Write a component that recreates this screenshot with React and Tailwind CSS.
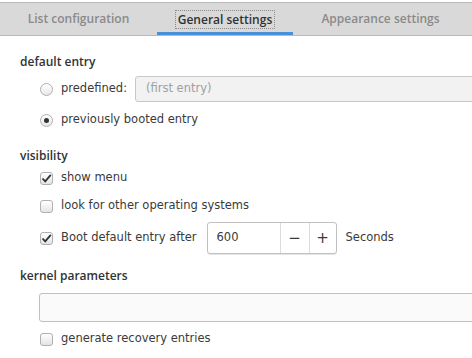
import React from "react";

function Radio({ checked }) {
  return (
    <span className="w-[13px] h-[13px] rounded-full border border-[#b0b0b0] bg-gradient-to-b from-[#ffffff] to-[#e8e8e8] flex items-center justify-center shrink-0">
      {checked && <span className="w-[5px] h-[5px] rounded-full bg-[#333]" />}
    </span>
  );
}

function Check({ checked }) {
  return (
    <span className="w-[13px] h-[13px] rounded-[3px] border border-[#b0b0b0] bg-gradient-to-b from-[#ffffff] to-[#e4e4e4] flex items-center justify-center shrink-0">
      {checked && (
        <svg width="11" height="11" viewBox="0 0 11 11">
          <path d="M1.5 5.5 L4.2 8.3 L9.8 1.8" fill="none" stroke="#2e3436" strokeWidth="1.8" />
        </svg>
      )}
    </span>
  );
}

export default function App() {
  const body = { fontFamily: '"DejaVu Sans", sans-serif' };
  const head = { fontFamily: '"Open Sans", sans-serif' };
  return (
    <div className="w-[472px] h-[358px] bg-white overflow-hidden text-[#3a3a3a]" style={body}>
      <div className="h-[34px] mt-[2px] bg-[#d9d9d9] border-t border-b border-[#b8b8b8] flex text-[12px] font-semibold" style={head}>
        <div className="w-[157px] flex items-center justify-center text-[#8a8a8a]">List configuration</div>
        <div className="w-[136px] flex items-center justify-center border-b-[3px] border-[#4a90d9] pt-[3px]">
          <span className="px-[2px] border border-dotted border-[#8a8a8a] leading-[17px] text-[#2e3436]">General settings</span>
        </div>
        <div className="w-[179px] flex items-center justify-center text-[#8a8a8a] pr-[4px]">Appearance settings</div>
      </div>

      <div className="pl-[20px] text-[11.5px]">
        <div className="mt-[17px] text-[12px] font-semibold text-[#2e3436]" style={head}>default entry</div>
        <div className="pl-[20px]">
          <div className="mt-[5px] flex items-center h-[26px]">
            <Radio />
            <span className="ml-[8px] w-[74px]">predefined:</span>
            <div className="flex-1 h-[26px] -mr-[4px] bg-[#f2f2f2] border border-[#c8c8c8] rounded-l-[3px] flex items-center pl-[10px] text-[#a0a0a0]">(first entry)</div>
          </div>
          <div className="mt-[5px] flex items-center h-[26px]">
            <Radio checked />
            <span className="ml-[8px]">previously booted entry</span>
          </div>
        </div>

        <div className="mt-[14px] text-[12px] font-semibold text-[#2e3436]" style={head}>visibility</div>
        <div className="pl-[20px]">
          <div className="flex items-center h-[26px]">
            <Check checked />
            <span className="ml-[8px]">show menu</span>
          </div>
          <div className="mt-[2px] flex items-center h-[26px]">
            <Check />
            <span className="ml-[8px]">look for other operating systems</span>
          </div>
          <div className="mt-[3px] flex items-center h-[32px]">
            <Check checked />
            <span className="ml-[8px]">Boot default entry after</span>
            <div className="ml-[10px] h-[32px] w-[130px] border border-[#c0c0c0] rounded-[3px] flex shadow-[0_1px_0_#e6e6e6]">
              <div className="w-[72px] flex items-center pl-[9px]">600</div>
              <div className="w-[29px] border-l border-[#dcdcdc] flex items-center justify-center text-[15px]">−</div>
              <div className="flex-1 border-l border-[#dcdcdc] flex items-center justify-center text-[15px]">+</div>
            </div>
            <span className="ml-[9px]">Seconds</span>
          </div>
        </div>

        <div className="mt-[13px] text-[12px] font-semibold text-[#2e3436]" style={head}>kernel parameters</div>
        <div className="pl-[19px]">
          <div className="mt-[8px] h-[29px] -mr-[4px] border border-[#c0c0c0] rounded-l-[3px] bg-[#fafafa]" />
          <div className="mt-[6px] flex items-center h-[22px] pl-[1px]">
            <Check />
            <span className="ml-[8px]">generate recovery entries</span>
          </div>
        </div>
      </div>
    </div>
  );
}
